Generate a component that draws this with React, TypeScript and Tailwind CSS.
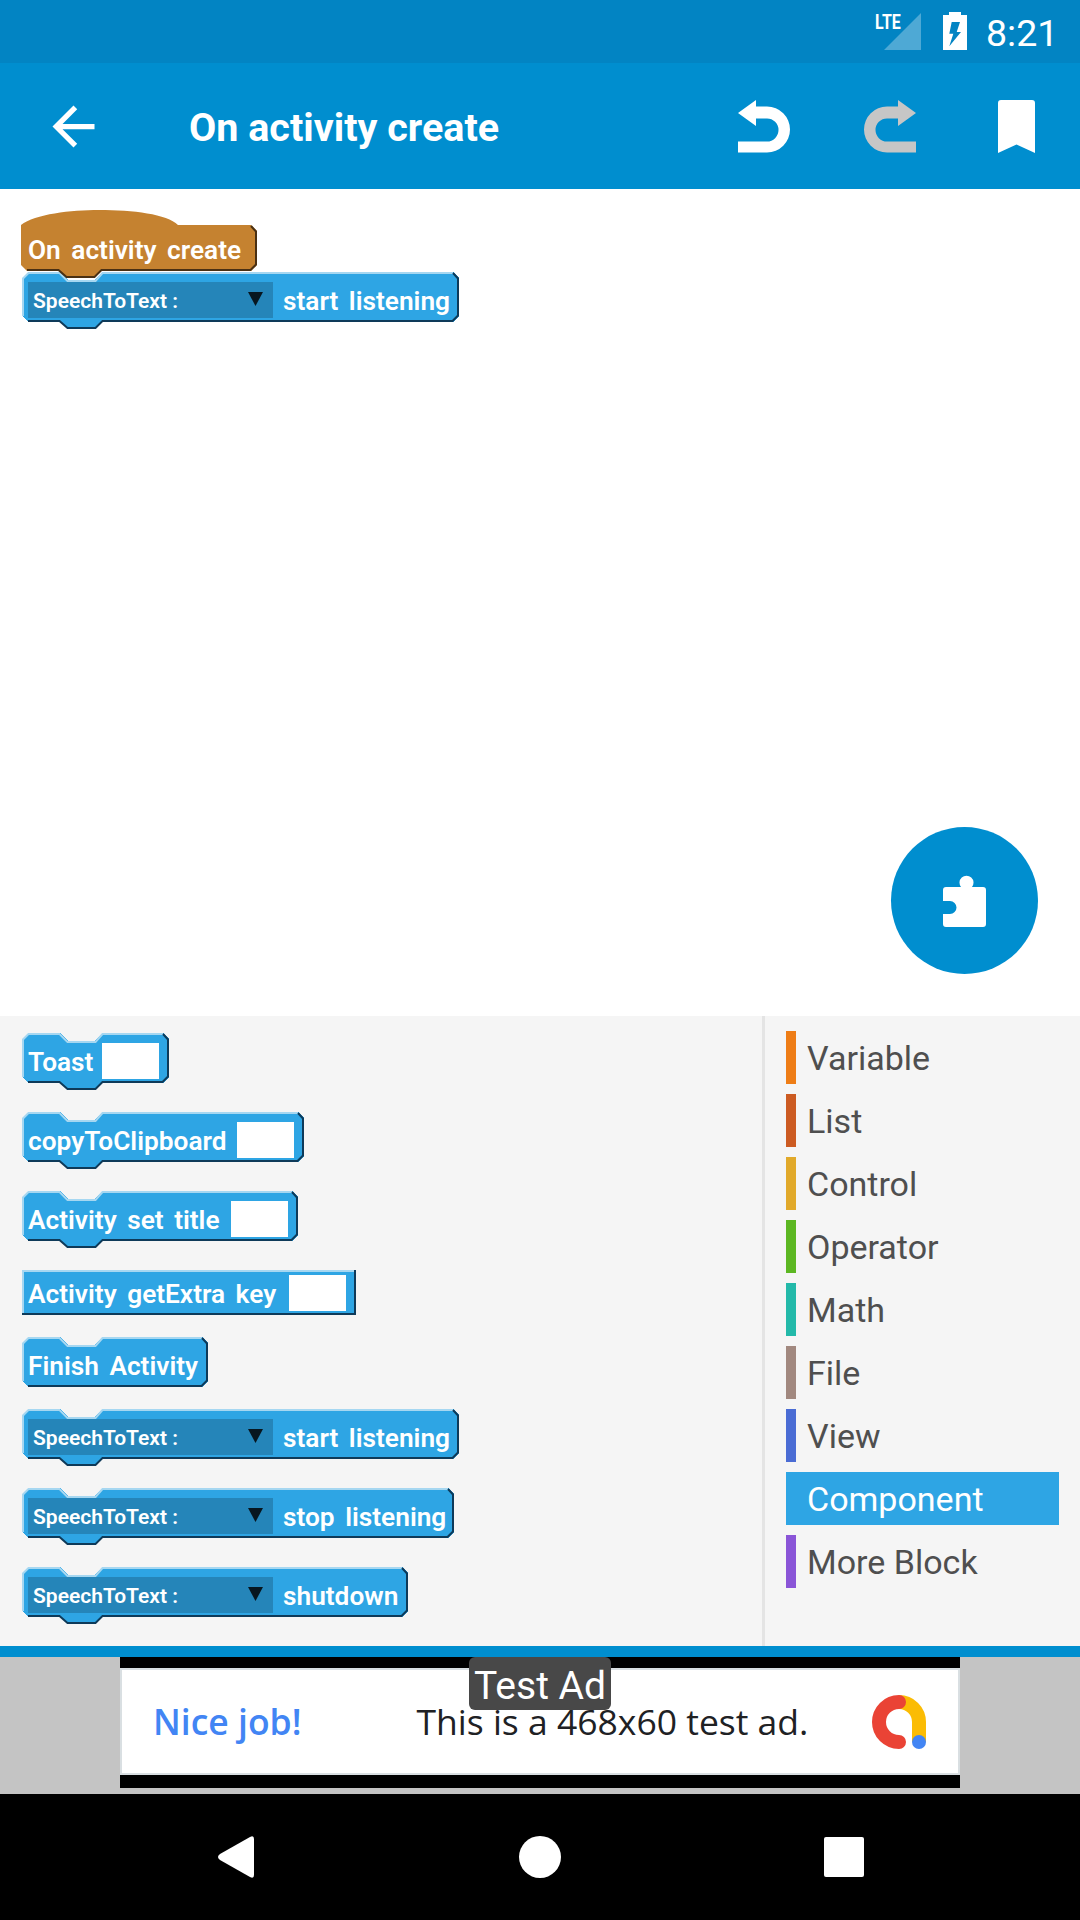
import React from "react";

const FILL = "#2ea5e4";
const LIGHT = "#a6d7f1";
const DARK = "#0e3a59";

function Shape({ w, h, notch, tab, chamfer = true, fill = FILL, light = LIGHT, dark = DARK }: { w: number; h: number; notch: boolean; tab: boolean; chamfer?: boolean; fill?: string; light?: string; dark?: string }) {
  const c = chamfer ? 6 : 0;
  const top = notch ? `${c},0 38,0 46,8 73,8 80,0` : `${c},0`;
  const bottom = tab ? `80,${h} 73,${h + 7} 46,${h + 7} 38,${h}` : "";
  return (
    <svg className="absolute left-0 top-0" width={w} height={h + (tab ? 7 : 0)} viewBox={`0 0 ${w} ${h + (tab ? 7 : 0)}`} shapeRendering="crispEdges">
      <polygon fill={fill} points={`0,${c} ${top} ${w - c},0 ${w},${c} ${w},${h - c} ${w - c},${h} ${bottom} ${c},${h} 0,${h - c}`} />
      <polyline fill="none" stroke={light} strokeWidth="2" shapeRendering="auto" points={`1,${h - c} 1,${c + 0.5} ${c + 0.5},1 ${notch ? `37.5,1 45.5,9 73.5,9 80.5,1 ` : ""}${w - c},1`} />
      <polyline fill="none" stroke={dark} strokeWidth="2" shapeRendering="auto" points={`${w - c},1 ${w - 1},${c + 0.5} ${w - 1},${h - c - 0.5} ${w - c - 0.5},${h - 1} ${tab ? `80.5,${h - 1} 73.5,${h + 6} 45.5,${h + 6} 37.5,${h - 1} ` : ""}${c},${h - 1}`} />
    </svg>
  );
}

function Block({ w, notch = true, tab = true, chamfer = true, h = 50, pt = "pt-[10px]", children }: { w: number; notch?: boolean; tab?: boolean; chamfer?: boolean; h?: number; pt?: string; children: React.ReactNode }) {
  return (
    <div className="relative shrink-0" style={{ width: w, height: h + (tab ? 7 : 0) }}>
      <Shape w={w} h={h} notch={notch} tab={tab} chamfer={chamfer} />
      <div className={`relative flex items-center pb-[4px] pl-[6px] pr-[10px] ${pt}`} style={{ height: h }}>
        {children}
      </div>
    </div>
  );
}

function Label({ children }: { children: React.ReactNode }) {
  return <span className="block whitespace-nowrap pt-[3px] text-[26.25px] font-semibold leading-none text-white [word-spacing:4px]">{children}</span>;
}

function Input() {
  return <div className="ml-auto h-[36px] w-[57px] bg-white" />;
}

function Speech({ w, label }: { w: number; label: string }) {
  return (
    <Block w={w}>
      <div className="flex h-[36px] w-[245px] shrink-0 items-center justify-between bg-[#2585b9] pl-[5px] pr-[10px]">
        <span className="block whitespace-nowrap pt-[2px] text-[21px] font-semibold leading-none text-white">SpeechToText :</span>
        <svg width="15" height="14" viewBox="0 0 15 14" className="mb-[3px]">
          <polygon points="0,0 15,0 7.5,14" fill="#07161f" />
        </svg>
      </div>
      <span className="ml-[10px]">
        <Label>{label}</Label>
      </span>
    </Block>
  );
}

function Hat() {
  const w = 236;
  const h = 61;
  return (
    <div className="relative z-10" style={{ width: w, height: h + 7 }}>
      <svg className="absolute left-0 top-0" width={w} height={h + 7} viewBox={`0 0 ${w} ${h + 7}`}>
        <path d={`M0 15 C14 4 50 0 78 0 C112 0 146 4 157 15 H${w - 6} L${w} 21 V${h - 6} L${w - 6} ${h} H80 L73 ${h + 7} H46 L38 ${h} H6 L0 ${h - 6} Z`} fill="#c58230" />
        <polyline fill="none" stroke="#4a3013" strokeWidth="2" points={`${w - 6},16 ${w - 1},21.5 ${w - 1},${h - 6.5} ${w - 6.5},${h - 1} 80.5,${h - 1} 73.5,${h + 6} 45.5,${h + 6} 37.5,${h - 1} 6,${h - 1}`} />
      </svg>
      <div className="relative flex items-center pl-[7px] pt-[16px]" style={{ height: h }}>
        <Label>On activity create</Label>
      </div>
    </div>
  );
}

const CATEGORIES: [string, string][] = [
  ["Variable", "#ee7d16"],
  ["List", "#cc5b22"],
  ["Control", "#e1a92a"],
  ["Operator", "#5cb722"],
  ["Math", "#23b9a9"],
  ["File", "#a1887f"],
  ["View", "#4a6cd4"],
  ["Component", "#2ea5e4"],
  ["More Block", "#8a55d7"],
];

function Category({ name, color }: { name: string; color: string }) {
  const active = name === "Component";
  return (
    <div className="flex h-[53px] items-center" style={active ? { backgroundColor: color } : undefined}>
      <div className="h-full w-[10px]" style={{ backgroundColor: color }} />
      <span className={`ml-[11px] text-[34px] leading-none ${active ? "text-white" : "text-[#4f4f4f]"}`}>{name}</span>
    </div>
  );
}

export default function App() {
  return (
    <div className="flex h-[1920px] w-[1080px] flex-col overflow-hidden bg-white font-[Roboto,sans-serif]">
      {/* status bar */}
      <div className="flex h-[63px] items-start bg-[#0284c3] pl-[875px]">
        <div className="relative h-[63px] w-[46px]">
          <span className="absolute left-0 top-[13px] origin-left scale-x-[0.8] text-[20px] font-bold leading-[18px] text-white">LTE</span>
          <svg className="absolute left-[9px] top-[13px]" width="37" height="37" viewBox="0 0 37 37">
            <polygon points="0,37 37,0 37,37" fill="#ffffff" fillOpacity="0.3" />
          </svg>
        </div>
        <svg className="ml-[22px] mt-[12px]" width="24" height="38" viewBox="0 0 24 38">
          <path d="M6 0H18V3H24V38H0V3H6Z" fill="#fff" />
          <path d="M8.7 10 H17 L13.7 20 H18 L6.3 34.3 L10.3 21.7 H6.3 Z" fill="#0284c3" />
        </svg>
        <span className="ml-[19px] mt-[15px] text-[37.5px] leading-[36px] text-white">8:21</span>
      </div>

      {/* app bar */}
      <div className="flex h-[126px] items-center bg-[#008ecf]">
        <svg className="ml-[42px]" width="63" height="63" viewBox="0 0 24 24">
          <path d="M20 11H7.83l5.59-5.59L12 4l-8 8 8 8 1.41-1.41L7.83 13H20v-2z" fill="#fff" />
        </svg>
        <span className="ml-[84px] block whitespace-nowrap pt-[3px] text-[39.5px] font-bold leading-none text-white">On activity create</span>
        <svg className="ml-auto" width="54" height="53" viewBox="0 0 54 53">
          <path d="M0 13 L18 0 V6.5 H29 A23 23 0 0 1 29 52.5 H0 V41.5 H29 A11.5 11.5 0 0 0 29 18.5 H18 V26 Z" fill="#fff" />
        </svg>
        <svg className="ml-[71px]" width="54" height="53" viewBox="0 0 54 53">
          <path transform="translate(53 0) scale(-1 1)" d="M0 13 L18 0 V6.5 H29 A23 23 0 0 1 29 52.5 H0 V41.5 H29 A11.5 11.5 0 0 0 29 18.5 H18 V26 Z" fill="#c6c6c6" />
        </svg>
        <svg className="ml-[81px] mr-[45px]" width="37" height="53" viewBox="0 0 37 53">
          <path d="M3 0 H34 A3 3 0 0 1 37 3 V53 L18.5 44.5 L0 53 V3 A3 3 0 0 1 3 0 Z" fill="#fff" />
        </svg>
      </div>

      {/* canvas */}
      <div className="relative flex h-[827px] flex-col items-start bg-white pl-[21px] pt-[21px]">
        <Hat />
        <div className="-mt-[6px] ml-[1px]">
          <Speech w={437} label="start listening" />
        </div>
        <button className="absolute left-[891px] top-[638px] flex h-[147px] w-[147px] items-center justify-center rounded-full bg-[#008ecf]">
          <svg width="43" height="53" viewBox="0 0 43 53">
            <path d="M3 13 H18 A7 7 0 1 1 29 13 H40 A3 3 0 0 1 43 16 V50 A3 3 0 0 1 40 53 H3 A3 3 0 0 1 0 50 V40 H7 A6.5 6.5 0 0 0 7 27 H0 V16 A3 3 0 0 1 3 13 Z" fill="#fff" />
          </svg>
        </button>
      </div>

      {/* palette */}
      <div className="flex h-[630px] bg-[#f5f5f5]">
        <div className="flex w-[762px] flex-col items-start gap-[22px] pl-[22px] pt-[17px]">
          <Block w={147}>
            <Label>Toast</Label>
            <Input />
          </Block>
          <Block w={282}>
            <Label>copyToClipboard</Label>
            <Input />
          </Block>
          <Block w={276}>
            <Label>Activity set title</Label>
            <Input />
          </Block>
          <Block w={334} h={45} notch={false} tab={false} chamfer={false} pt="pt-[5px]">
            <Label>Activity getExtra key</Label>
            <Input />
          </Block>
          <Block w={186} tab={false}>
            <Label>Finish Activity</Label>
          </Block>
          <Speech w={437} label="start listening" />
          <Speech w={432} label="stop listening" />
          <Speech w={386} label="shutdown" />
        </div>
        <div className="w-[3px] bg-[#e4e4e4]" />
        <div className="flex w-[315px] flex-col gap-[10px] pl-[21px] pr-[21px] pt-[15px]">
          {CATEGORIES.map(([n, c]) => (
            <Category key={n} name={n} color={c} />
          ))}
        </div>
      </div>

      {/* accent line */}
      <div className="h-[11px] bg-[#008ecf]" />

      {/* ad */}
      <div className="h-[137px] bg-[#c4c4c4] pl-[120px]">
        <div className="relative h-[131px] w-[840px] bg-black pb-[13px] pt-[11px]">
          <div className="flex h-[107px] items-center border-2 border-[#d9dfe2] bg-white pl-[31px] pr-[32px] font-['Open_Sans',sans-serif] text-[35.5px] leading-none">
            <span className="font-semibold text-[#4285f4]">Nice job!</span>
            <span className="ml-[115px] whitespace-nowrap text-[#202124]">This is a 468x60 test ad.</span>
            <svg className="ml-auto" width="54" height="54" viewBox="0 0 54 54">
              <path d="M27 7 A20 20 0 0 1 47 27 V47" fill="none" stroke="#fbbc04" strokeWidth="14" />
              <path d="M27 7 A20 20 0 0 0 27 47" fill="none" stroke="#ea4335" strokeWidth="14" strokeLinecap="round" />
              <circle cx="47" cy="47" r="7" fill="#4285f4" />
            </svg>
          </div>
          <div className="absolute left-[349px] top-0 flex h-[53px] w-[142px] items-center justify-center rounded-[6px] bg-[#484848] pt-[5px] text-[39px] leading-none text-white">
            Test Ad
          </div>
        </div>
      </div>

      {/* nav bar */}
      <div className="flex h-[126px] items-center bg-black pl-[217px]">
        <svg width="38" height="42" viewBox="0 0 38 42">
          <path d="M3 18 L33 1 Q37 -1 37 3 V39 Q37 43 33 41 L3 24 Q-1 21 3 18 Z" fill="#fff" />
        </svg>
        <div className="ml-[264px] h-[42px] w-[42px] rounded-full bg-white" />
        <div className="ml-[263px] h-[40px] w-[40px] rounded-[2px] bg-white" />
      </div>
    </div>
  );
}
